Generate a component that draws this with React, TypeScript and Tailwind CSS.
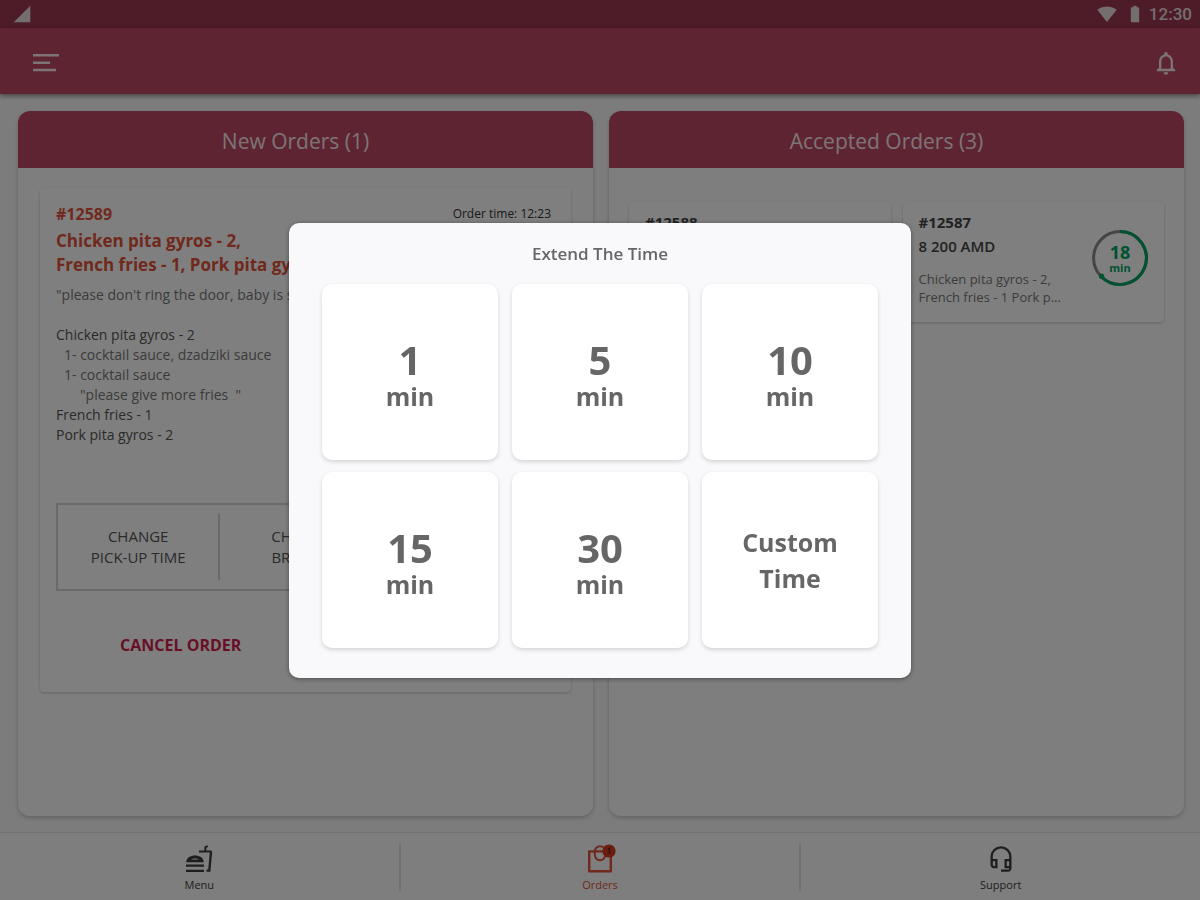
import type { ReactNode } from 'react';
import {
  MdBatteryFull,
  MdNotificationsNone,
  MdOutlineHeadsetMic,
  MdSignalCellular4Bar,
  MdSignalWifi4Bar,
} from 'react-icons/md';

const TIMES = ['1', '5', '10', '15', '30'];

const EXTRAS = ['1- cocktail sauce, dzadziki sauce', '1- cocktail sauce'];

function MenuIcon() {
  return (
    <svg className="h-7 w-7" viewBox="0 0 28 28" fill="none" stroke="currentColor" strokeWidth="2.4">
      <path d="M1 6.2h26M1 13.7h17M1 21h23" />
    </svg>
  );
}

function BurgerIcon() {
  return (
    <svg className="h-7 w-7" viewBox="0 0 28 28" fill="none" stroke="currentColor">
      <path d="M1.2 17.2C1.6 12.6 5.4 10.6 10 10.6s8.400 2 8.800 6.600z" fill="currentColor" stroke="none" />
      <path d="M6 14.600c1.200-1.500 6.800-1.500 8 0z" fill="#fff" stroke="none" />
      <path d="M1 20.700h18M1 25.800h18" strokeWidth="2.200" />
      <path d="M14 6.600h12.800M20.400 6.400V2.200l2.400-1" strokeWidth="2" />
      <path d="M26 7l-1.700 18.600h-2.800" strokeWidth="2.400" />
    </svg>
  );
}

function BagIcon() {
  return (
    <svg className="h-8 w-8" viewBox="0 0 32 32" fill="none" stroke="currentColor">
      <path d="M5.200 8.400h21.600v19.800H5.200z" strokeWidth="2.400" strokeLinejoin="round" />
      <path d="M10.800 8.400a5.200 5.200 0 0 1 10.400 0M10.800 12a5.200 5.200 0 0 0 10.400 0M10.800 8v4" strokeWidth="2" />
      <circle cx="25" cy="8" r="6.600" fill="#d43a20" stroke="none" />
      <path d="M24 6l1.400-1v6" stroke="#6e1c12" strokeWidth="1.400" />
    </svg>
  );
}

function Panel({ title, children }: { title: string; children: ReactNode }) {
  return (
    <section className="flex flex-col overflow-hidden rounded-xl bg-[#fdfdfd] shadow-[0_2px_4px_rgba(0,0,0,0.2)]">
      <h2 className="bg-[#bc4862] pb-[13px] pl-4 pr-9 pt-4 text-center text-[21px] leading-7 text-[#fbe9ee]">
        {title}
      </h2>
      {children}
    </section>
  );
}

function Timer({ minutes }: { minutes: number }) {
  return (
    <div className="relative h-14 w-14 shrink-0 font-bold text-[#00a562]">
      <svg className="h-14 w-14" viewBox="0 0 56 56" fill="none" strokeWidth="3">
        <circle cx="28" cy="28" r="26.400" stroke="#8a8a8a" />
        <path d="M28 1.600A26.400 26.400 0 1 1 9.300 46.700" stroke="currentColor" />
        <circle cx="9.600" cy="46.200" r="2.600" fill="currentColor" stroke="none" />
      </svg>
      <div className="absolute inset-0 flex flex-col items-center justify-center">
        <span className="text-[18px] leading-5">{minutes}</span>
        <span className="text-[11px] leading-3">min</span>
      </div>
    </div>
  );
}

function NavItem({ label, active, children }: { label: string; active?: boolean; children: ReactNode }) {
  return (
    <a
      href="#"
      className={`flex h-12 flex-1 flex-col items-center justify-between text-[11px] leading-3 ${
        active ? 'text-[#e05238]' : 'text-[#3c3c3c]'
      }`}
    >
      <span className="flex h-8 items-center justify-center">{children}</span>
      {label}
    </a>
  );
}

export default function App() {
  return (
    <div className="flex min-h-screen flex-col bg-[#f8f8f8] font-['Open_Sans','Noto_Sans',sans-serif] text-[#555]">
      <div className="flex h-7 items-center justify-between bg-[#9a3850] px-2 text-[#e8dcdf]">
        <MdSignalCellular4Bar className="ml-1 h-5 w-5" />
        <div className="flex items-center gap-1">
          <MdSignalWifi4Bar className="h-5 w-5" />
          <MdBatteryFull className="ml-1 h-5 w-5" />
          <span className="font-[Roboto,sans-serif] text-[17px] font-medium leading-6">12:30</span>
        </div>
      </div>

      <header className="flex h-[66px] items-center justify-between bg-[#bc4862] pl-8 pr-5 pt-1 text-[#fbe9ee] shadow-[0_2px_5px_rgba(0,0,0,0.45)]">
        <button type="button" aria-label="Menu">
          <MenuIcon />
        </button>
        <button type="button" aria-label="Notifications">
          <MdNotificationsNone className="h-7 w-7" />
        </button>
      </header>

      <main className="grid flex-1 grid-cols-2 gap-4 pb-4 pl-[18px] pr-4 pt-[17px]">
        <Panel title="New Orders (1)">
          <article className="mx-[22px] mt-5 flex h-[504px] flex-col rounded-sm bg-white px-4 pt-3 shadow-[0_1px_3px_rgba(0,0,0,0.2)]">
            <div className="flex items-center justify-between pr-1">
              <h3 className="text-[16px] font-bold leading-7 text-[#e05238]">#12589</h3>
              <span className="text-[12px] leading-5 text-[#333]">Order time: 12:23</span>
            </div>
            <p className="mt-px text-[17px] font-bold leading-6 text-[#e05238]">
              Chicken pita gyros - 2,
              <br />
              French fries - 1, Pork pita gyros - 2
            </p>
            <p className="mt-2 text-[14px] leading-5 text-[#777]">"please don't ring the door, baby is sleeping"</p>
            <ul className="mt-5 text-[14px] leading-5">
              <li>Chicken pita gyros - 2</li>
              {EXTRAS.map((extra) => (
                <li key={extra} className="pl-2 text-[#777]">
                  {extra}
                </li>
              ))}
              <li className="whitespace-pre pl-6 text-[#777]">"please give more fries  "</li>
              <li>French fries - 1</li>
              <li>Pork pita gyros - 2</li>
            </ul>

            <div className="mt-[58px] grid h-[88px] grid-cols-3 items-center border-2 border-[#d4d4d4] pr-2 text-[15px] leading-[21px]">
              <button type="button" className="h-[66px] border-r-2 border-[#d4d4d4]">
                CHANGE
                <br />
                PICK-UP TIME
              </button>
              <button type="button" className="h-[66px]">
                CHANGE
                <br />
                BRANCH
              </button>
            </div>
            <div className="mt-8 grid grid-cols-2">
              <button type="button" className="h-11 text-[16px] font-bold text-[#d01f4b]">
                CANCEL ORDER
              </button>
            </div>
          </article>
        </Panel>

        <Panel title="Accepted Orders (3)">
          <div className="mx-5 mt-[34px] grid grid-cols-2 gap-3">
            <article className="rounded-sm bg-white px-4 py-2 shadow-[0_1px_3px_rgba(0,0,0,0.2)]">
              <h3 className="text-[15px] font-bold leading-6 text-[#444]">#12588</h3>
            </article>
            <article className="flex items-center justify-between rounded-sm bg-white px-4 pb-4 pt-2 shadow-[0_1px_3px_rgba(0,0,0,0.2)]">
              <div>
                <h3 className="text-[15px] font-bold leading-6 text-[#444]">#12587</h3>
                <p className="text-[15px] font-semibold leading-6 text-[#444]">8 200 AMD</p>
                <p className="mt-3 text-[13px] leading-[18px] text-[#777]">
                  Chicken pita gyros - 2,
                  <br />
                  French fries - 1 Pork p...
                </p>
              </div>
              <Timer minutes={18} />
            </article>
          </div>
        </Panel>
      </main>

      <nav className="flex h-[68px] items-center divide-x-2 divide-[#dedede] border-t border-[#e6e6e6] bg-[#fdfdfd]">
        <NavItem label="Menu">
          <BurgerIcon />
        </NavItem>
        <NavItem label="Orders" active>
          <BagIcon />
        </NavItem>
        <NavItem label="Support">
          <MdOutlineHeadsetMic className="h-7 w-7" />
        </NavItem>
      </nav>

      {/* Extend time dialog */}
      <div className="fixed inset-0 flex items-center justify-center bg-black/50">
        <div
          role="dialog"
          aria-labelledby="extend-title"
          className="w-full max-w-[622px] rounded-[10px] bg-[#f9f9fb] px-[33px] pb-[30px] pt-[19px] text-[#666] shadow-[0_1px_5px_rgba(0,0,0,0.4)]"
        >
          <h2 id="extend-title" className="mb-[18px] text-center text-[17px] font-semibold leading-6">
            Extend The Time
          </h2>
          <div className="grid grid-cols-3 gap-x-[14px] gap-y-3 font-bold">
            {TIMES.map((time) => (
              <button
                key={time}
                type="button"
                className="flex h-44 flex-col items-center justify-center rounded-[10px] bg-white pt-2 shadow-[0_2px_4px_rgba(0,0,0,0.15)]"
              >
                <span className="text-[40px] leading-10">{time}</span>
                <span className="text-[25px] leading-8">min</span>
              </button>
            ))}
            <button
              type="button"
              className="h-44 rounded-[10px] bg-white text-[25px] leading-9 shadow-[0_2px_4px_rgba(0,0,0,0.15)]"
            >
              Custom
              <br />
              Time
            </button>
          </div>
        </div>
      </div>
    </div>
  );
}
